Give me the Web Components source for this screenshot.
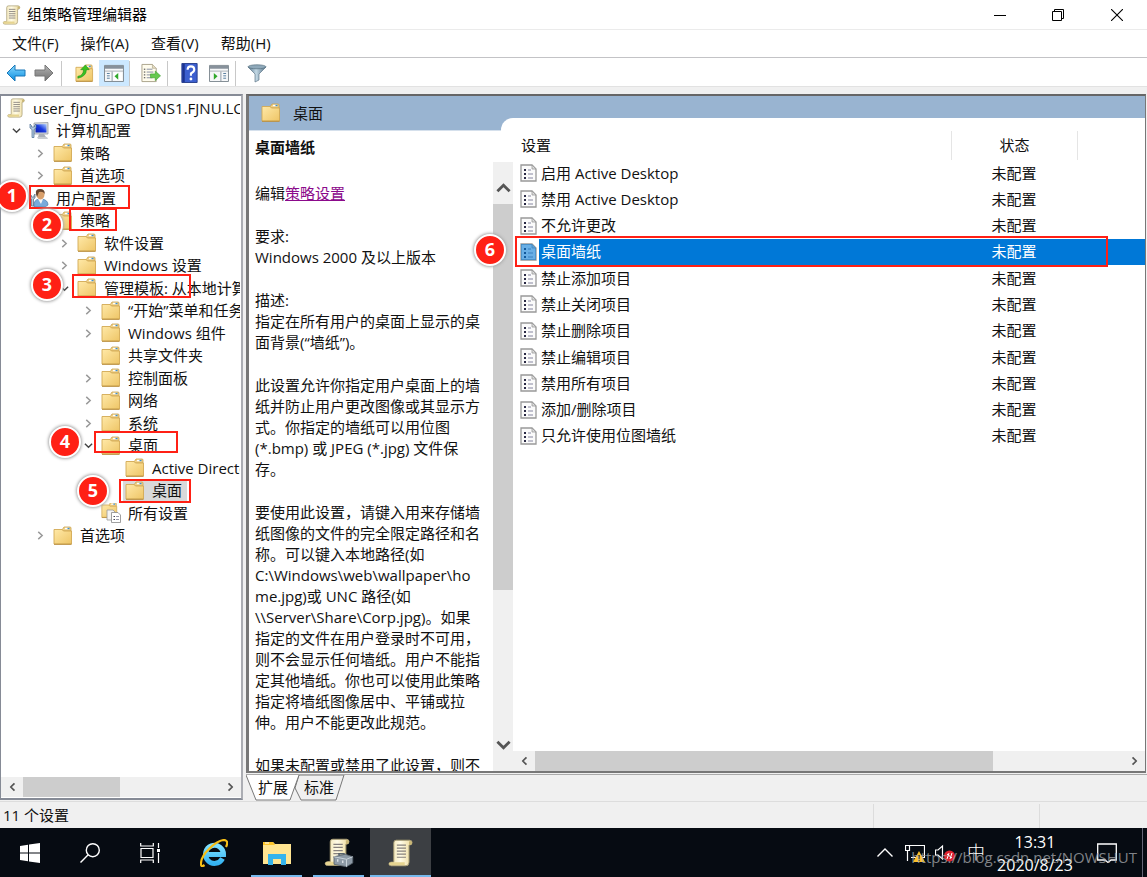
<!DOCTYPE html>
<html lang="zh-CN">
<head>
<meta charset="utf-8">
<title>组策略管理编辑器</title>
<style>
html,body{margin:0;height:100%}
body{font:15px/21px "Open Sans","Noto Sans CJK SC",sans-serif;color:#111;background:#f0f0f0;overflow:hidden}
</style>
</head>
<body>
<gp-app></gp-app>
<script>
const scroll = (extra = '') => `<defs><linearGradient id="p" x1="0" x2="1"><stop offset="0" stop-color="#efdfa6"/><stop offset=".5" stop-color="#fffbe6"/><stop offset="1" stop-color="#ecd99a"/></linearGradient></defs>
<path d="M5 3Q5 1 7 1H18Q20 1 20 3Q20 5 17.500 5V19Q17.500 22 15 22H3Q1 22 1 20.500Q1 19 3 19H5Z" fill="url(#p)" stroke="#a69a72" stroke-width=".8"/><path d="M17.500 5V2Q20 1 20 3Q20 5 17.500 5Z" fill="#c9b676"/><path d="M3 19H14V21.500H3Q1 21 1 20.500Q1 19 3 19Z" fill="#e6d490"/><path d="M7.500 5H15M7.500 7.500H15M7.500 10H15M7.500 12.500H15M7.500 15H15" stroke="#87817d" stroke-width="1"/>${extra}`;
const folder = `<defs><linearGradient id="f" x1="0" y1="0" x2="1" y2="1"><stop offset="0" stop-color="#ffe9a8"/><stop offset="1" stop-color="#eec566"/></linearGradient></defs><path d="M9 4L11 1H17Q18 1 18 2V5H9Z" fill="#f1d28a" stroke="#c9a24e" stroke-width=".8"/><path d="M12 2.500H16" stroke="#fff" stroke-width="1.400"/><path d="M14.500 2.500H16.500" stroke="#3d8fd0" stroke-width="1.400"/><path d="M1 3.500H9L10.500 5H18.500V18H1Z" fill="url(#f)" stroke="#d3a953" stroke-width=".9"/><path d="M1 18.300H18.500" stroke="#b98f40"/>`;
const policy = `<path d="M1 1H12L16 5V17H1Z" fill="#fbfbfb" stroke="#999" stroke-width="1.300"/><path d="M12 1V5H16Z" fill="#ddd" stroke="#999" stroke-width=".8"/><path d="M4 5H6V7H4ZM4 9H6V11H4ZM4 13H6V15H4Z" fill="#2b2b46"/><path d="M8 6H11M8 10H13M8 14H13" stroke="#8585a0" stroke-width="1.200"/>`;
const ICONS = {
 scroll: ['0 0 21 23', scroll()],
 toolscroll: ['0 0 24 24', scroll('<path d="M12 14V12.500H16V14" fill="none" stroke="#55606a" stroke-width="1.200"/><path d="M8 15L17 13L23 15V20L18 23L8 21Z" fill="#8d9aa6" stroke="#58636d" stroke-width=".7"/><path d="M8 15L18 17L23 15M18 17V23" fill="none" stroke="#c8d2da" stroke-width=".8"/><path d="M11 17V19M15 18V20" stroke="#e3e8ec"/>')],
 folder: ['0 0 20 20', folder],
 folderdocs: ['0 0 20 20', `<g transform="translate(0 -1) scale(.85)">${folder}</g><path d="M6 7H12L14 9V17H6Z" fill="#f4f4f4" stroke="#999" stroke-width=".8"/><path d="M10.500 9.500H17L19.500 12V19.500H10.500Z" fill="#fff" stroke="#888" stroke-width=".8"/><path d="M12.500 13.500H14M12.500 16.500H14" stroke="#445"/><path d="M15 13.500H18M15 16.500H18" stroke="#99a"/>`],
 computer: ['0 0 20 20', `<defs><linearGradient id="s" x1="0" y1="1" x2="1" y2="0"><stop offset="0" stop-color="#0718a8"/><stop offset=".5" stop-color="#1a3be0"/><stop offset="1" stop-color="#b5d4ff"/></linearGradient></defs><path d="M5 2L19 1.500V13H5Z" fill="#d9dcdf" stroke="#8b9198" stroke-width=".7"/><path d="M6.500 3.500L17.500 3V11.500H6.500Z" fill="url(#s)"/><path d="M10 13H15L17 16H9Z" fill="#aab0b8"/><path d="M8 16H18L19 18H9Z" fill="#c8ccd0"/><path d="M1 3V7L3 8.500V16.500H5V8.500L7 7V3L5.500 4.500V6H2.500V4.500Z" fill="#b6cce0" stroke="#486b92" stroke-width=".7"/>`],
 user: ['0 0 20 20', `<path d="M5 19Q4 12 10 11H13Q19 12 19 17L16 19Z" fill="#78aadb" stroke="#477bab" stroke-width=".7"/><path d="M9 11L12 16L14 11Z" fill="#f5f5f5"/><ellipse cx="11.500" cy="6.500" rx="4" ry="5" fill="#d9a06c"/><path d="M7 6Q6 1 11 1Q16 1 15.800 6Q14 3 10 4L8 9Z" fill="#68462e"/><path d="M1 6V10L2.500 11V18H4.500V11L6 10V6L5 7.500V9H2.500V7.500Z" fill="#b8c9d8" stroke="#4f6880" stroke-width=".7"/>`],
 policy: ['0 0 17 18', policy],
 policysel: ['0 0 17 18', policy + '<path d="M1 1H12L16 5V17H1Z" fill="#0078d7" opacity=".58"/>'],
 back: ['0 0 20 18', `<defs><linearGradient id="b" x1="0" y1="0" x2="0" y2="1"><stop offset="0" stop-color="#8bdbff"/><stop offset="1" stop-color="#078ce0"/></linearGradient></defs><path d="M1 9L9 1V6H19V12H9V17Z" fill="url(#b)" stroke="#1877b8"/>`],
 fwd: ['0 0 20 18', `<defs><linearGradient id="g" x1="0" y1="0" x2="0" y2="1"><stop offset="0" stop-color="#b5b5b5"/><stop offset="1" stop-color="#707070"/></linearGradient></defs><path d="M19 9L11 1V6H1V12H11V17Z" fill="url(#g)" stroke="#777"/>`],
 up: ['0 0 20 20', folder + '<path d="M3 13Q9 12 9 6H6L11 1L15 6H12Q12 13 3 15Z" fill="#38c322" stroke="#208a16" stroke-width=".6"/>'],
 pane: ['0 0 21 19', `<path d="M.5 1.500H20.500V18.500H.5Z" fill="#f7f8f9" stroke="#7d8790"/><path d="M1 2H20V5H1Z" fill="#87919b"/><path d="M1 7.500H20" stroke="#aab1b8"/><path d="M3 10H6M3 12.500H6M3 15H6" stroke="#51799b"/><path d="M8.500 8V18" stroke="#8995a0"/><path d="M10 9H19V17H10Z" fill="#fff"/><path d="M11 13L15 9.500V16.500Z" fill="#31a82b"/>`],
 pane2: ['0 0 21 19', `<path d="M.5 1.500H20.500V18.500H.5Z" fill="#f7f8f9" stroke="#7d8790"/><path d="M1 2H20V5H1Z" fill="#87919b"/><path d="M1 7.500H20" stroke="#aab1b8"/><path d="M15 10H18M15 12.500H18M15 15H18" stroke="#51799b"/><path d="M12.500 8V18" stroke="#8995a0"/><path d="M9 13L5 9.500V16.500Z" fill="#31a82b"/>`],
 export: ['0 0 21 20', `<path d="M1 1H12L16 5V19H1Z" fill="#fffced" stroke="#aaa28a"/><path d="M12 1V5H16" fill="#e7dfc4" stroke="#aaa28a" stroke-width=".7"/><path d="M6 6H12M6 9H13M6 12H11M6 15H12" stroke="#848ba0"/><path d="M3 6H4.500M3 9H4.500M3 12H4.500M3 15H4.500" stroke="#333"/><path d="M10 11H15V8L20.500 13L15 18V15H10Z" fill="#66c94e" stroke="#42a535" stroke-width=".7"/>`],
 help: ['0 0 17 21', `<path d="M.5.5H16.500V20.500H.5Z" fill="#3c5fcf" stroke="#263d8c"/><path d="M1 1H3.500V20H1Z" fill="#1d338f"/><path d="M6.500 7Q6.500 3.500 10 3.500Q13.500 3.500 13.500 7Q13.500 9 10 11V13.500" fill="none" stroke="#fff" stroke-width="2.200"/><circle cx="10" cy="16.800" r="1.500" fill="#fff"/>`],
 filter: ['0 0 20 19', `<defs><linearGradient id="t"><stop offset="0" stop-color="#50718a"/><stop offset=".45" stop-color="#c4d9e5"/><stop offset="1" stop-color="#527087"/></linearGradient></defs><path d="M1 3L8 10V18L12 16V10L19 3Z" fill="url(#t)" stroke="#61798a" stroke-width=".7"/><ellipse cx="10" cy="2.800" rx="9" ry="2" fill="#8fa9ba" stroke="#56707f" stroke-width=".7"/>`],
 min: ['0 0 12 12', '<path d="M0 6.500H12" stroke="#000"/>'],
 max: ['0 0 12 12', '<path d="M.5 2.500H9.500V11.500H.5ZM2.500 2.500V.5H11.500V9.500H9.500" fill="none" stroke="#000"/>'],
 close: ['0 0 12 12', '<path d="M0 0L12 12M12 0L0 12" stroke="#000" stroke-width="1.100"/>'],
 win: ['0 0 20 20', '<path d="M0 3L8 1.800V9.400H0ZM9 1.600L20 0V9.400H9ZM0 10.400H8V18.200L0 17ZM9 10.400H20V20L9 18.400Z" fill="#fff"/>'],
 search: ['0 0 20 20', '<g fill="none" stroke="#fff" stroke-width="1.400"><circle cx="12.800" cy="7.200" r="6.500"/><path d="M8.200 11.800L.5 19.500"/></g>'],
 task: ['0 0 20 20', '<g fill="none" stroke="#fff" stroke-width="1.200"><path d="M1 5.500H13V14.500H1ZM.7 0V3H13.300V0M.7 20V17H13.300V20M18.500 0V5M18.500 10V20"/></g><path d="M17 6H20V9H17Z" fill="#fff"/>'],
 ie: ['0 0 28 28', `<defs><linearGradient id="i" x1="0" y1="0" x2="0" y2="1"><stop offset="0" stop-color="#7fe0ff"/><stop offset="1" stop-color="#35b4f2"/></linearGradient></defs><path d="M22.500 19.500A9 9 0 1 1 23.500 15.500H8" fill="none" stroke="url(#i)" stroke-width="5"/><path d="M4.500 26Q.5 29 1 24Q1.500 17 9 10Q18 1 24.500 1Q29 2 26 8" fill="none" stroke="#f6be16" stroke-width="2.200"/>`],
 explorer: ['0 0 28 24', '<path d="M0 1H10L12 3H28V23H0Z" fill="#ffe591"/><path d="M0 1H10L12 4H0Z" fill="#fcc52b"/><path d="M2 2H6" stroke="#fff"/><path d="M5 13H23V24H18V18H10V24H5Z" fill="#35b4ec"/>'],
 trayup: ['0 0 16 9', '<path d="M.5 8.500L8 1L15.500 8.500" fill="none" stroke="#fff" stroke-width="1.400"/>'],
 net: ['0 0 20 18', '<path d="M4.500 1.500H19.500V13.500H6M.5 1.500H4.500V6.500H.5ZM2.500 7V17" fill="none" stroke="#fff" stroke-width="1.200"/><path d="M14 7L20 18H8Z" fill="#fbc028"/><path d="M14 11V15M14 16V17" stroke="#222" stroke-width="1.500"/>'],
 vol: ['0 0 20 18', '<path d="M.5 6V11H3L7.500 15V2L3 6Z" fill="none" stroke="#fff" stroke-width="1.200"/><circle cx="14.500" cy="12" r="5.500" fill="#df2430"/><path d="M12 15L14 9M15 15L17 9M12 10L17 14" stroke="#fff"/>'],
 note: ['0 0 20 20', '<path d="M.7 1H19.300V17H14L11 19.500L8 17H.7Z" fill="none" stroke="#fff" stroke-width="1.300"/>'],
 right: ['0 0 8 8', '<path d="M2 .8L5.500 4L2 7.200" fill="none" stroke="#999" stroke-width="1.300"/>'],
 down: ['0 0 8 8', '<path d="M.8 2.500L4 5.500L7.200 2.500" fill="none" stroke="#444" stroke-width="1.300"/>'],
 arrow: ['0 0 16 10', '<path d="M1.500 8.500L8 2L14.500 8.500" fill="none" stroke="#555" stroke-width="3"/>']
};
const define = (name, render) => customElements.define(name, class extends HTMLElement {
  connectedCallback() {
    if (this.shadowRoot) return;
    const t = document.createElement('template');
    t.innerHTML = render(this);
    this.attachShadow({mode: 'open'}).append(t.content.cloneNode(true));
  }
});
const icon = (n, w, h) => `<ui-icon name="${n}" w="${w}" h="${h || w}"></ui-icon>`;

define('ui-icon', e => { const [box, art] = ICONS[e.getAttribute('name')];
  return `<style>:host{display:block;flex:none}svg{display:block}</style><svg aria-hidden="true" width="${e.getAttribute('w')}" height="${e.getAttribute('h')}" viewBox="${box}">${art}</svg>`; });

define('title-bar', () => `<style>
:host{display:flex;align-items:center;height:29px;background:#fff;border-bottom:1px solid #ebebeb;padding-left:2px;color:#000}
span{flex:1;padding-left:6px}button{width:58px;height:29px;border:0;background:none;display:grid;place-items:center;padding:0}button:last-child{width:60px}
</style>${icon('scroll', 19, 20)}<span><slot></slot></span>
<button aria-label="最小化">${icon('min', 12)}</button><button aria-label="还原">${icon('max', 12)}</button><button aria-label="关闭">${icon('close', 12)}</button>`);

define('menu-bar', () => `<style>
:host{display:flex;gap:22px;height:27px;padding-left:12px;background:#fff;border-bottom:1px solid #c3c3c6}
button{font:inherit;color:inherit;border:0;background:none;padding:0}
</style>${['文件(F)', '操作(A)', '查看(V)', '帮助(H)'].map(t => `<button>${t}</button>`).join('')}`);

define('tool-bar', () => `<style>
:host{display:flex;align-items:flex-end;height:28px;padding-left:2px;background:#fff;border-bottom:1px solid #e2e2e2}
button{width:28px;height:26px;border:0;background:none;display:grid;place-items:center;padding:0}
button.wide{width:30px}
button.on{background:#cce8ff}i{width:1px;height:25px;background:#c8c8c8;margin:0 6px 0 1px}i.first{margin:0 7px 0 3px}i.tight{margin-left:0}
</style><button aria-label="后退">${icon('back', 20, 18)}</button><button aria-label="前进">${icon('fwd', 20, 18)}</button><i class="first"></i>
<button class="wide" aria-label="上一级">${icon('up', 19)}</button><button aria-label="显示树" class="on wide">${icon('pane', 20, 18)}</button><i class="tight"></i>
<button class="wide" aria-label="导出列表">${icon('export', 20, 20)}</button><i></i>
<button class="wide" aria-label="帮助">${icon('help', 17, 20)}</button><button class="wide" aria-label="显示操作窗格">${icon('pane2', 20, 18)}</button><i></i>
<button class="wide" aria-label="筛选器">${icon('filter', 20, 19)}</button>`);

define('scroll-bar', e => { const v = e.hasAttribute('vertical'), [a, b] = e.getAttribute('ratio').split(' ');
  const c = v ? icon('arrow', 15, 10) : icon('arrow', 9, 6);
  return `<style>
:host{display:flex;flex:none;flex-direction:${v ? 'column' : 'row'};${v ? 'width:20px' : 'height:20px'};background:#f0f0f0}
button{box-sizing:border-box;border:0;padding:0;background:none;display:grid;place-items:center;flex:none;${v ? 'height:42px' : 'width:22px'}}
.thumb{flex:${a};background:#cdcdcd}.rest{flex:${b}}
${v ? '.s{padding-top:10px}.e{padding-bottom:10px}' : ''}
.s ui-icon{transform:rotate(${v ? 0 : -90}deg)}.e ui-icon{transform:rotate(${v ? 180 : 90}deg)}
</style><button class="s" aria-label="${v ? '上' : '左'}">${c}</button><div class="thumb"></div><div class="rest"></div><button class="e" aria-label="${v ? '下' : '右'}">${c}</button>`; });

define('tree-row', e => { const o = e.getAttribute('open');
  return `<style>
:host{display:flex;flex:1;min-height:0;align-items:center;white-space:nowrap;padding-left:calc(7px + 24px * var(--level))}
:host([root]){padding-left:5px}
.c{flex:none;width:16px;margin-right:5px;display:grid;place-items:center}:host([root]) .c{display:none}
.t{margin-left:7px}
:host([selected]) .b{background:#d9d9d9;margin:0 -5px 0 -2px;padding:0 5px 0 2px}.b{flex:none;display:flex;align-items:center;height:22px}
</style><span class="c">${o === null ? '' : icon(o ? 'down' : 'right', 9)}</span><span class="b">${icon(e.getAttribute('icon') || 'folder', 20)}<span class="t"><slot></slot></span></span>`; });

const TREE = [
 [0, 'user_fjnu_GPO [DNS1.FJNU.LOCAL]', 'root icon="scroll"'], [0, '计算机配置', 'open="1" icon="computer"'],
 [1, '策略', 'open=""'], [1, '首选项', 'open=""'], [0, '用户配置', 'open="1" icon="user"'], [1, '策略', 'open="1"'],
 [2, '软件设置', 'open=""'], [2, 'Windows 设置', 'open=""'], [2, '管理模板: 从本地计算机', 'open="1"'],
 [3, '“开始”菜单和任务栏', 'open=""'], [3, 'Windows 组件', 'open=""'], [3, '共享文件夹', ''], [3, '控制面板', 'open=""'],
 [3, '网络', 'open=""'], [3, '系统', 'open=""'], [3, '桌面', 'open="1"'], [4, 'Active Directory', ''], [4, '桌面', 'selected'],
 [3, '所有设置', 'icon="folderdocs"'], [1, '首选项', 'open=""']];
define('tree-pane', () => `<style>
:host{display:flex;flex-direction:column;box-sizing:border-box;width:243px;flex:none;background:#fff;border:solid #868b96;border-width:2px 2px 2px 1px;border-right-color:#abadb3;overflow:hidden}
.tree{display:flex;flex-direction:column;height:450px;padding-top:1px;flex:none;overflow:hidden;margin-right:1px}
scroll-bar{margin-top:auto;margin-bottom:1px}
</style><div class="tree" role="tree">${TREE.map(([l, t, a]) => `<tree-row role="treeitem" style="--level:${l}" ${a}>${t}</tree-row>`).join('')}</div><scroll-bar ratio="96 99"></scroll-bar>`);

define('policy-help', () => `<style>
:host{display:block;flex:1;min-width:0;overflow:hidden;white-space:nowrap;padding:6px 0 0 6px}
h2{font:inherit;font-weight:700;margin:0 0 25px}p{margin:0 0 22px}a{color:#8b0a8b}
</style><h2>桌面墙纸</h2><p>编辑<a href="#edit">策略设置</a></p>
<p>要求:<br>Windows 2000 及以上版本</p>
<p>描述:<br>指定在所有用户的桌面上显示的桌<br>面背景(“墙纸”)。</p>
<p>此设置允许你指定用户桌面上的墙<br>纸并防止用户更改图像或其显示方<br>式。你指定的墙纸可以用位图<br>(*.bmp) 或 JPEG (*.jpg) 文件保<br>存。</p>
<p>要使用此设置，请键入用来存储墙<br>纸图像的文件的完全限定路径和名<br>称。可以键入本地路径(如<br>C:\\Windows\\web\\wallpaper\\ho<br>me.jpg)或 UNC 路径(如<br>\\\\Server\\Share\\Corp.jpg)。如果<br>指定的文件在用户登录时不可用，<br>则不会显示任何墙纸。用户不能指<br>定其他墙纸。你也可以使用此策略<br>指定将墙纸图像居中、平铺或拉<br>伸。用户不能更改此规范。</p>
<p>如果未配置或禁用了此设置，则不</p>`);

const ROWS = ['启用 Active Desktop', '禁用 Active Desktop', '不允许更改', '桌面墙纸', '禁止添加项目', '禁止关闭项目', '禁止删除项目', '禁止编辑项目', '禁用所有项目', '添加/删除项目', '只允许使用位图墙纸'];
define('policy-list', () => `<style>
:host{display:flex;flex-direction:column;flex:1;min-width:0}
table,thead{display:block}tbody{display:grid;grid-auto-rows:1fr;height:289px}
tr{display:flex;align-items:stretch}th{font-weight:400;height:29px;box-sizing:border-box}
th,td{padding:0;display:flex;align-items:center}
th:first-child,td:first-child{flex:1}th:first-child{padding-left:8px}
th:nth-child(2),td:nth-child(2){width:126px;justify-content:center}
th:nth-child(3),td:nth-child(3){width:68px}
th+th{border-left:1px solid #e5e5e5;box-sizing:border-box}
td:first-child{padding-left:7px}td ui-icon{margin-right:2px}
td span{flex:1;align-self:stretch;display:flex;align-items:center;padding-left:2px}
.sel{color:#fff}.sel span,.sel td+td{background:#0078d7}
scroll-bar{margin-top:auto}
</style><table><thead><tr><th>设置</th><th>状态</th><th></th></tr></thead><tbody>${ROWS.map((r, i) => `<tr${i === 3 ? ' class="sel"' : ''}><td>${icon(i === 3 ? 'policysel' : 'policy', 17, 18)}<span>${r}</span></td><td>未配置</td><td></td></tr>`).join('')}</tbody></table><scroll-bar ratio="458 130"></scroll-bar>`);

define('detail-pane', () => `<style>
:host{display:flex;flex-direction:column;flex:1;min-width:0}
.frame{flex:1;min-height:0;display:flex;flex-direction:column;background:#fff;border:2px solid #777;border-top-color:#666;border-right-width:1px;border-left-width:3px;margin-right:1px}
header{display:flex;height:34px;background:#99b4d1;border-bottom:1px solid #d5e0ec;flex:none}
.name{width:252px;display:flex;align-items:center;box-sizing:border-box;padding-left:12px;gap:12px}
.notch{flex:1;height:13px;align-self:flex-end;margin-bottom:-1px;background:#fff;border-top-left-radius:12px}
.body{display:flex;flex:1;min-height:0}.left{display:flex;width:264px;flex:none}
.left scroll-bar{margin-top:31px}
nav{display:flex;height:25px;flex:none;margin-top:1px;border-top:1px solid #aaa;position:relative;z-index:0}
nav button{border:0;background:none;font:inherit;color:inherit;padding:0;height:25px;width:38px}
nav button:first-of-type{width:54px}
nav svg{position:absolute;left:0;top:0;z-index:-1}
</style><div class="frame"><header><div class="name">${icon('folder', 20)}<span>桌面</span></div><div class="notch"></div></header>
<div class="body"><div class="left"><policy-help></policy-help><scroll-bar vertical ratio="386 139"></scroll-bar></div><policy-list></policy-list></div></div>
<nav><svg width="102" height="26" viewBox="0 0 102 26"><path d="M53 0H98L90 25H55L49 13Z" fill="#f0f0f0" stroke="#777"/><path d="M0 0L10 25H44L53 0" fill="#fff" stroke="#777"/></svg><button>扩展</button><button>标准</button></nav>`);

define('status-bar', () => `<style>
:host{display:flex;height:26px;flex:none;border-top:1px solid #ddd;margin-top:1px}
span{flex:1;padding:3px 0 0 3px}i{width:165px;border-left:1px solid #dcdcdc;margin-top:2px}i:last-child{width:107px}
</style><span><slot></slot></span><i></i><i></i>`);

define('task-bar', () => `<style>
:host{display:flex;height:49px;flex:none;background:#060b12;color:#fff}
button{border:0;padding:0;background:none;display:grid;place-items:center;width:60px;box-sizing:border-box;color:inherit;font:inherit}
.ie{width:68px}.run{width:51px;border-bottom:2px solid #76b9ed;border-top:2px solid transparent}.run+.run{margin-left:11px}
.run.cur{width:61px;background:#3c3f43;border-top-color:#3c3f43;margin-left:6px}.gap{width:3px}
.tray{margin-left:auto;display:flex;align-items:center}
.tray button{width:30px;height:49px}.tray .ime{font-size:18px;font-weight:300;width:32px}
.clock{width:86px;text-align:center;font-size:16px;line-height:23px;padding-top:2px}
.tray .note{width:58px;margin-right:6px}.end{width:4px;align-self:stretch;border-left:1px solid #667}
</style><button aria-label="开始">${icon('win', 20)}</button><button aria-label="搜索">${icon('search', 20)}</button><button aria-label="任务视图">${icon('task', 20)}</button>
<button class="ie" aria-label="Internet Explorer">${icon('ie', 28)}</button><div class="gap"></div>
<button class="run" aria-label="文件资源管理器">${icon('explorer', 28, 24)}</button><button class="run" aria-label="组策略管理">${icon('toolscroll', 30)}</button><button class="run cur" aria-label="组策略管理编辑器">${icon('scroll', 27, 28)}</button>
<div class="tray"><button aria-label="显示隐藏的图标">${icon('trayup', 16, 9)}</button><button aria-label="网络">${icon('net', 20, 18)}</button><button aria-label="音量">${icon('vol', 20, 18)}</button><button class="ime">中</button>
<div class="clock">13:31<br>2020/8/23</div><button class="note" aria-label="通知">${icon('note', 20)}</button><div class="end"></div></div>`);

define('step-mark', () => `<style>
:host{position:absolute;box-sizing:border-box;border:2px solid #ff2015;pointer-events:none}
b{position:absolute;left:var(--bx);top:var(--by);width:28px;height:28px;border:2px solid #fff;border-radius:50%;background:#ff2015;color:#fff;box-shadow:0 0 3px 1px #aaa;text-align:center;font:700 18px/26px "Open Sans",sans-serif}
</style><b><slot></slot></b>`);

const MARKS = [[29,185,101,24,-35,-7],[69,208,48,23,-40,-1],[72,274,119,24,-43,-7],[94,431,84,22,-47,-7],[119,479,72,24,-44,-6],[515,236,593,31,-43,-4]];
define('gp-app', () => `<style>
:host{display:flex;flex-direction:column;height:100vh;position:relative;overflow:hidden}
title-bar,menu-bar,tool-bar{flex:none}
main{flex:1;min-height:0;display:flex;gap:3px;padding-top:7px}
.wm{position:absolute;right:10px;bottom:9px;font-size:15px;color:#a9acb0;opacity:.75}
</style><title-bar>组策略管理编辑器</title-bar><menu-bar></menu-bar><tool-bar></tool-bar>
<main><tree-pane></tree-pane><detail-pane></detail-pane></main><status-bar>11 个设置</status-bar><task-bar></task-bar>
${MARKS.map(([x, y, w, h, bx, by], i) => `<step-mark style="left:${x}px;top:${y}px;width:${w}px;height:${h}px;--bx:${bx}px;--by:${by}px">${i + 1}</step-mark>`).join('')}
<span class="wm">https://blog.csdn.net/NOWSHUT</span>`);
</script>
</body>
</html>
